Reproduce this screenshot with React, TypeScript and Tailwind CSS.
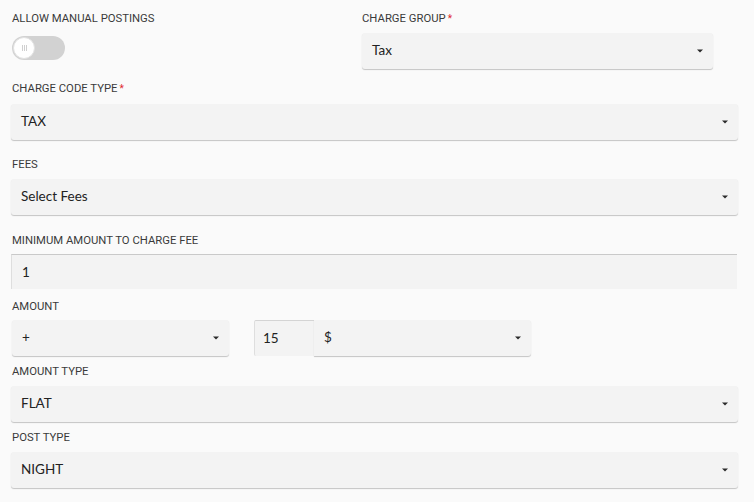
import React from "react";

const valueFont = { fontFamily: '"Lato", "Open Sans", sans-serif' };
const labelFont = { fontFamily: 'Roboto, "Liberation Sans", sans-serif' };

function Caret() {
  return (
    <svg width="6" height="4" viewBox="0 0 6 4" className="shrink-0">
      <path d="M0 0.5 L6 0.5 L3 3.5 Z" fill="#2a2a2a" />
    </svg>
  );
}

function Label({ text, required, className = "" }: { text: string; required?: boolean; className?: string }) {
  return (
    <div
      className={"h-4 pt-[1.5px] text-[11.3px] leading-4 text-[#3a3a3a] uppercase whitespace-nowrap " + className}
      style={labelFont}
    >
      {text}
      {required && <span className="text-[#e0282e] ml-[2px] text-[10px] align-top">*</span>}
    </div>
  );
}

function Select({ value, className = "" }: { value: string; className?: string }) {
  return (
    <div
      className={
        "h-9 flex items-center justify-between pl-[10px] pr-[10px] bg-[#f3f3f3] rounded-[3px] shadow-[0_1px_1px_rgba(0,0,0,0.22)] text-[13.5px] text-[#222] " +
        className
      }
    >
      <span className="-mt-px">{value}</span>
      <Caret />
    </div>
  );
}

export default function App() {
  return (
    <div className="w-[754px] h-[502px] bg-[#fafafa] overflow-hidden" style={valueFont}>
      <div className="flex pl-[12px]">
        <div className="w-[350px]">
          <Label text="Allow Manual Postings" className="mt-[9px]" />
          <div className="mt-[11px] w-[53px] h-6 rounded-full bg-[#d2d2d2] flex items-center pl-[1px]">
            <div className="w-[22px] h-[22px] rounded-full bg-white border border-[#e2e2e2] flex items-center justify-center gap-[1px]">
              <span className="w-px h-[6px] bg-[#d0d0d0]" />
              <span className="w-px h-[6px] bg-[#d0d0d0]" />
              <span className="w-px h-[6px] bg-[#d0d0d0]" />
            </div>
          </div>
        </div>
        <div className="w-[351px]">
          <Label text="Charge Group" required className="mt-[9px]" />
          <Select value="Tax" className="mt-[8px]" />
        </div>
      </div>

      <div className="pl-[11px] w-[738px]">
        <Label text="Charge Code Type" required className="mt-[10px] pl-px" />
        <Select value="TAX" className="mt-[9px] pr-[9px]" />

        <Label text="Fees" className="mt-[15px] pl-px" />
        <Select value="Select Fees" className="mt-[8px] pr-[9px]" />

        <Label text="Minimum Amount to Charge Fee" className="mt-[16px] pl-px" />
        <div className="mt-[7px] h-[35px] w-[726px] flex items-center pl-[10px] bg-[#f3f3f3] border-t border-l border-t-[#c9c9c9] border-l-[#dedede] text-[13.5px] text-[#222]">
          1
        </div>

        <Label text="Amount" className="mt-[8px] pl-px" />
        <div className="mt-[7px] flex pl-px">
          <Select value="+" className="w-[217px]" />
          <div className="ml-[25px] w-[60px] h-9 flex items-center pl-[8px] bg-[#f3f3f3] border-t border-l border-t-[#d4d4d4] border-l-[#dedede] rounded-l-[2px] text-[13.5px] text-[#222]">
            <span className="-mt-px">15</span>
          </div>
          <Select value="$" className="w-[217px] pl-[8px] rounded-l-none" />
        </div>

        <Label text="Amount Type" className="mt-[6px] pl-px" />
        <Select value="FLAT" className="mt-[8px] pr-[9px]" />

        <Label text="Post Type" className="mt-[6px] pl-px" />
        <Select value="NIGHT" className="mt-[8px] pr-[9px]" />
      </div>
    </div>
  );
}
